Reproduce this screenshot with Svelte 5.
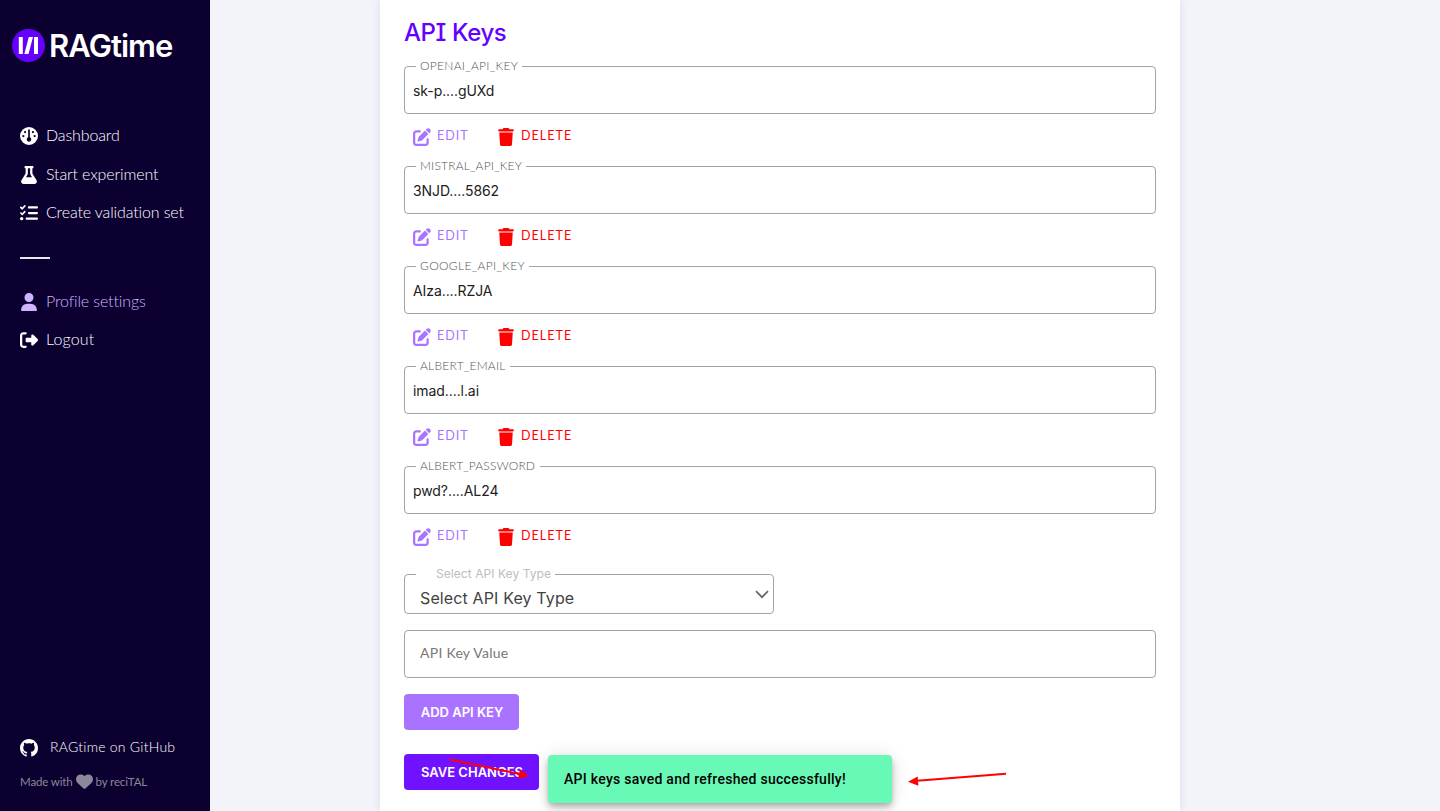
<script>
  const keys = [
    { name: 'OPENAI_API_KEY', value: 'sk-p....gUXd', width: 106, spacing: 0.3 },
    { name: 'MISTRAL_API_KEY', value: '3NJD....5862', width: 110, spacing: 0.2 },
    { name: 'GOOGLE_API_KEY', value: 'AIza....RZJA', width: 113, spacing: 0.35 },
    { name: 'ALBERT_EMAIL', value: 'imad....l.ai', width: 94, spacing: 0.25 },
    { name: 'ALBERT_PASSWORD', value: 'pwd?....AL24', width: 124, spacing: 0.15 }
  ];
  const icons = {
    flask: ['0 0 448 512', 'M288 0H160 128C110.3 0 96 14.3 96 32s14.3 32 32 32V196.8c0 11.8-3.3 23.5-9.5 33.5L10.3 406.2C3.6 417.2 0 429.7 0 442.6C0 480.9 31.1 512 69.4 512H378.6c38.3 0 69.4-31.1 69.4-69.4c0-12.8-3.6-25.4-10.3-36.4L329.5 230.4c-6.2-10.1-9.5-21.7-9.5-33.5V64c17.7 0 32-14.3 32-32s-14.3-32-32-32H288zM192 196.8V64h64V196.8c0 23.7 6.6 46.9 19 67.1L309.5 320h-171L173 263.9c12.4-20.2 19-43.4 19-67.1z'],
    gauge: ['0 0 512 512', 'M0 256a256 256 0 1 1 512 0A256 256 0 1 1 0 256zm320 96c0-26.9-16.5-49.9-40-59.3V88c0-13.3-10.7-24-24-24s-24 10.7-24 24V292.7c-23.5 9.5-40 32.5-40 59.3c0 35.3 28.7 64 64 64s64-28.7 64-64zM144 176a32 32 0 1 0 0-64 32 32 0 1 0 0 64zm-16 80a32 32 0 1 0-64 0 32 32 0 1 0 64 0zm288 32a32 32 0 1 0 0-64 32 32 0 1 0 0 64zM400 144a32 32 0 1 0-64 0 32 32 0 1 0 64 0z'],
    list: ['0 0 512 512', 'M152.1 38.2c9.9 8.9 10.7 24 1.8 33.9l-72 80c-4.4 4.9-10.6 7.8-17.2 7.9s-12.9-2.4-17.6-7L7 113C-2.3 103.6-2.3 88.4 7 79s24.6-9.4 33.9 0l22.1 22.1 55.1-61.2c8.9-9.9 24-10.7 33.9-1.8zm0 160c9.9 8.9 10.7 24 1.8 33.9l-72 80c-4.4 4.9-10.6 7.8-17.2 7.9s-12.9-2.4-17.6-7L7 273c-9.4-9.4-9.4-24.6 0-33.9s24.6-9.4 33.9 0l22.1 22.1 55.1-61.2c8.9-9.9 24-10.7 33.9-1.8zM224 96c0-17.7 14.3-32 32-32H480c17.7 0 32 14.3 32 32s-14.3 32-32 32H256c-17.7 0-32-14.3-32-32zm0 160c0-17.7 14.3-32 32-32H480c17.7 0 32 14.3 32 32s-14.3 32-32 32H256c-17.7 0-32-14.3-32-32zM160 416c0-17.7 14.3-32 32-32H480c17.7 0 32 14.3 32 32s-14.3 32-32 32H192c-17.7 0-32-14.3-32-32zM48 368a48 48 0 1 1 0 96 48 48 0 1 1 0-96z'],
    user: ['0 0 448 512', 'M224 256A128 128 0 1 0 224 0a128 128 0 1 0 0 256zm-45.7 48C79.8 304 0 383.8 0 482.3C0 498.7 13.3 512 29.7 512H418.3c16.4 0 29.7-13.3 29.7-29.7C448 383.8 368.2 304 269.7 304H178.3z'],
    logout: ['0 0 512 512', 'M377.9 105.9L500.7 228.7c7.2 7.2 11.3 17.1 11.3 27.3s-4.1 20.1-11.3 27.3L377.9 406.1c-6.4 6.4-15 9.9-24 9.9c-18.7 0-33.9-15.2-33.9-33.9l0-62.1-128 0c-17.7 0-32-14.3-32-32l0-64c0-17.7 14.3-32 32-32l128 0 0-62.1c0-18.7 15.2-33.9 33.9-33.9c9 0 17.6 3.6 24 9.9zM160 96L96 96c-17.7 0-32 14.3-32 32l0 256c0 17.7 14.3 32 32 32l64 0c17.7 0 32 14.3 32 32s-14.3 32-32 32l-64 0c-53 0-96-43-96-96L0 128C0 75 43 32 96 32l64 0c17.7 0 32 14.3 32 32s-14.3 32-32 32z'],
    edit: ['0 0 512 512', 'M471.6 21.7c-21.9-21.9-57.3-21.9-79.2 0L362.3 51.7l97.9 97.9 30.1-30.1c21.9-21.9 21.9-57.3 0-79.2L471.6 21.7zm-299.2 220c-6.1 6.1-10.8 13.6-13.5 21.9l-29.6 88.8c-2.9 8.6-.6 18.1 5.8 24.6s15.9 8.7 24.6 5.8l88.8-29.6c8.2-2.7 15.7-7.4 21.9-13.5L437.7 172.3 339.7 74.3 172.4 241.7zM96 64C43 64 0 107 0 160V416c0 53 43 96 96 96H352c53 0 96-43 96-96V320c0-17.7-14.3-32-32-32s-32 14.3-32 32v96c0 17.7-14.3 32-32 32H96c-17.7 0-32-14.3-32-32V160c0-17.7 14.3-32 32-32h96c17.7 0 32-14.3 32-32s-14.3-32-32-32H96z'],
    trash: ['0 0 448 512', 'M135.2 17.7L128 32H32C14.3 32 0 46.3 0 64S14.3 96 32 96H416c17.7 0 32-14.3 32-32s-14.3-32-32-32H320l-7.2-14.3C307.4 6.8 296.3 0 284.2 0H163.8c-12.1 0-23.2 6.8-28.6 17.7zM416 128H32L53.2 467c1.6 25.3 22.6 45 47.9 45H346.9c25.3 0 46.3-19.7 47.9-45L416 128z'],
    github: ['0 0 16 16', 'M8 0C3.58 0 0 3.58 0 8c0 3.54 2.29 6.53 5.47 7.59.4.07.55-.17.55-.38 0-.19-.01-.82-.01-1.49-2.01.37-2.53-.49-2.69-.94-.09-.23-.48-.94-.82-1.13-.28-.15-.68-.52-.01-.53.63-.01 1.08.58 1.23.82.72 1.21 1.87.87 2.33.66.07-.52.28-.87.51-1.07-1.78-.2-3.64-.89-3.64-3.95 0-.87.31-1.59.82-2.15-.08-.2-.36-1.02.08-2.12 0 0 .67-.21 2.2.82.64-.18 1.32-.27 2-.27s1.36.09 2 .27c1.53-1.04 2.2-.82 2.2-.82.44 1.1.16 1.92.08 2.12.51.56.82 1.27.82 2.15 0 3.07-1.87 3.75-3.65 3.95.29.25.54.73.54 1.48 0 1.07-.01 1.93-.01 2.2 0 .21.15.46.55.38A8.01 8.01 0 0 0 16 8c0-4.42-3.58-8-8-8z'],
    heart: ['0 0 512 512', 'M47.6 300.4L228.3 469.1c7.5 7 17.4 10.9 27.7 10.9s20.2-3.9 27.7-10.9L464.4 300.4c30.4-28.3 47.6-68 47.6-109.5v-5.8c0-69.9-50.5-129.5-119.4-141C347 36.5 300.6 51.4 268 84L256 96 244 84c-32.6-32.6-79-47.5-124.6-39.9C50.5 55.6 0 115.2 0 185.1v5.8c0 41.5 17.2 81.2 47.6 109.5z']
  };
</script>

{#snippet icon(name, size = 18)}
  <svg class="icon" viewBox={icons[name][0]} width={size} height={size} fill="currentColor"><path d={icons[name][1]} /></svg>
{/snippet}

<div class="page">
  <aside>
    <div class="brand">
      <svg width="33" height="33" viewBox="0 0 33 33">
        <circle cx="16.5" cy="16.5" r="16.5" fill="#6500ff" />
        <path d="M6.800 8h4v17h-4zM22 8h4v17h-4zM16.800 8h4.200l-4.500 17h-4.200z" fill="#fff" />
      </svg>
      <span>RAGtime</span>
    </div>
    <nav>
      <a class="dash">{@render icon('gauge')}<span>Dashboard</span></a>
      <a class="start">{@render icon('flask')}<span>Start experiment</span></a>
      <a class="create">{@render icon('list')}<span>Create validation set</span></a>
      <hr />
      <a class="profile">{@render icon('user')}<span>Profile settings</span></a>
      <a class="logout">{@render icon('logout')}<span>Logout</span></a>
    </nav>
    <footer>
      <a class="github">{@render icon('github')}<span>RAGtime on GitHub</span></a>
      <p><span class="made">Made with</span>{@render icon('heart', 17)}<span class="by">by reciTAL</span></p>
    </footer>
  </aside>

  <main>
    <section>
      <h2>API Keys</h2>
      {#each keys as key}
        <div class="key">
          <div class="field">
            <label style:width="{key.width}px" style:letter-spacing="{key.spacing}px"><span>{key.name}</span></label>
            <span class="value">{key.value}</span>
          </div>
          <div class="actions">
            <button class="edit">{@render icon('edit')}<span>EDIT</span></button>
            <button class="delete">{@render icon('trash')}<span>DELETE</span></button>
          </div>
        </div>
      {/each}
      <div class="field select">
        <label><span>Select API Key Type</span></label>
        <span class="choice">Select API Key Type</span>
        <svg width="14" height="9" viewBox="0 0 14 9" fill="none" stroke="#666" stroke-width="1.7"><path d="M1 1.2 7 7.2 13 1.2" /></svg>
      </div>
      <div class="field new"><span>API Key Value</span></div>
      <button class="add">ADD API KEY</button>
      <button class="save">SAVE CHANGES</button>
    </section>
  </main>

  <div class="toast">API keys saved and refreshed successfully!</div>
  <svg class="arrows" width="560" height="46" viewBox="450 755 560 46" stroke="#f00" stroke-width="2" fill="#f00">
    <path d="M449.500 759.500 520 774" /><path stroke="none" d="M529 776.200 518 778.500 520 769.500z" />
    <path d="M1006 773.700 917 780.800" /><path stroke="none" d="M908 781.700 917.700 776.500 918.300 785.800z" />
  </svg>
</div>

<style>
  :global(body) { overflow: hidden; }
  .page { position: relative; display: flex; width: 1440px; height: 811px; overflow: hidden; background: #f3f4fa; font-family: Inter, sans-serif; }
  * { box-sizing: border-box; }
  .icon { flex: none; display: block; }
  aside { display: flex; flex-direction: column; width: 210px; height: 811px; padding: 28px 12px 21px; background: #0c0030; color: #fff; font-family: Lato, sans-serif; }
  .brand { display: flex; align-items: center; gap: 4px; height: 34px; }
  .brand span { padding-top: 2px; font: 600 31px/34px Inter, sans-serif; letter-spacing: -.95px; white-space: nowrap; }
  nav { display: flex; flex-direction: column; padding: 55px 8px 0; }
  a { display: flex; align-items: center; gap: 8px; height: 38.500px; font-size: 16px; font-weight: 300; letter-spacing: -.13px; white-space: nowrap; }
  a span { padding-bottom: 3px; }
  hr { width: 30px; height: 2px; margin: 24px 0 24px; border: 0; background: #e9e6ee; }
  .profile { color: #cfb5ff; }
  .logout { height: 37px; letter-spacing: .15px; }
  footer { margin-top: auto; padding: 0 8px; }
  .github { gap: 12px; height: 38px; font-size: 14px; letter-spacing: .25px; }
  footer p { display: flex; align-items: center; gap: 3px; height: 17px; margin: 6px 0 0; color: #8c8799; font-size: 11.500px; letter-spacing: -.13px; white-space: nowrap; }
  footer p span { padding-bottom: 1px; }
  main { flex: 1; display: flex; justify-content: center; padding-right: 90px; }
  section { flex: none; width: 800px; height: 811px; padding: 15px 24px 0; background: #fff; box-shadow: 0 0 10px rgba(30, 20, 80, .1); }
  h2 { height: 36px; margin: 0 0 15px; color: #6500ff; font: 500 24px/36px Inter, sans-serif; font-feature-settings: "cv08"; letter-spacing: -.4px; white-space: nowrap; }
  .key { height: 100px; }
  .field { position: relative; display: flex; align-items: center; height: 48px; border: 1px solid #a3a3a3; border-radius: 4px; }
  label { position: absolute; left: 11px; top: -9px; height: 16px; padding-left: 4px; background: #fff; color: #555; font: 300 12px/16px Lato, sans-serif; white-space: nowrap; }
  .value { padding: 0 0 0 8px; color: #212121; font-size: 14px; letter-spacing: -.08px; }
  .actions { display: flex; align-items: center; height: 45px; padding-left: 8px; }
  button { display: flex; align-items: center; padding: 0; border: 0; background: none; white-space: nowrap; }
  .actions button { gap: 7px; font: 400 12.500px/18px Lato, sans-serif; letter-spacing: 1.050px; }
  .actions .icon { position: relative; left: .5px; }
  .edit { width: 84px; color: #a875ff; }
  .delete { color: #f00; }
  .actions button span { position: relative; top: -1px; }
  .select { width: 370px; height: 40px; margin: 8px 0 16px; justify-content: space-between; padding: 0 4px 0 15px; }
  .select label { width: 139px; padding-left: 20px; color: #bdbdbd; font: 400 12px/16px Inter, sans-serif; letter-spacing: .06px; }
  .choice { padding-top: 7px; color: #424242; font-size: 16px; letter-spacing: .13px; }
  .new { padding: 0 15px 3px; color: #777; font: 400 14px Lato, sans-serif; letter-spacing: .25px; }
  .add, .save { justify-content: center; height: 36px; padding-left: 1px; border-radius: 4px; color: #fff; font: 600 13px Inter, sans-serif; }
  .add { width: 115px; margin: 16px 0 24px; background: #a973ff; }
  .save { width: 135px; background: #7011ff; }
  .toast { position: absolute; left: 548px; top: 755px; width: 344px; height: 48px; padding-left: 16px; border-radius: 4px; background: #69f9b7; color: #000; font: 500 14px/48px Roboto, sans-serif; letter-spacing: .28px; box-shadow: 0 3px 5px -1px rgba(0,0,0,.2), 0 6px 10px rgba(0,0,0,.14), 0 1px 18px rgba(0,0,0,.12); white-space: nowrap; }
  .arrows { position: absolute; left: 450px; top: 755px; overflow: visible; }
</style>
